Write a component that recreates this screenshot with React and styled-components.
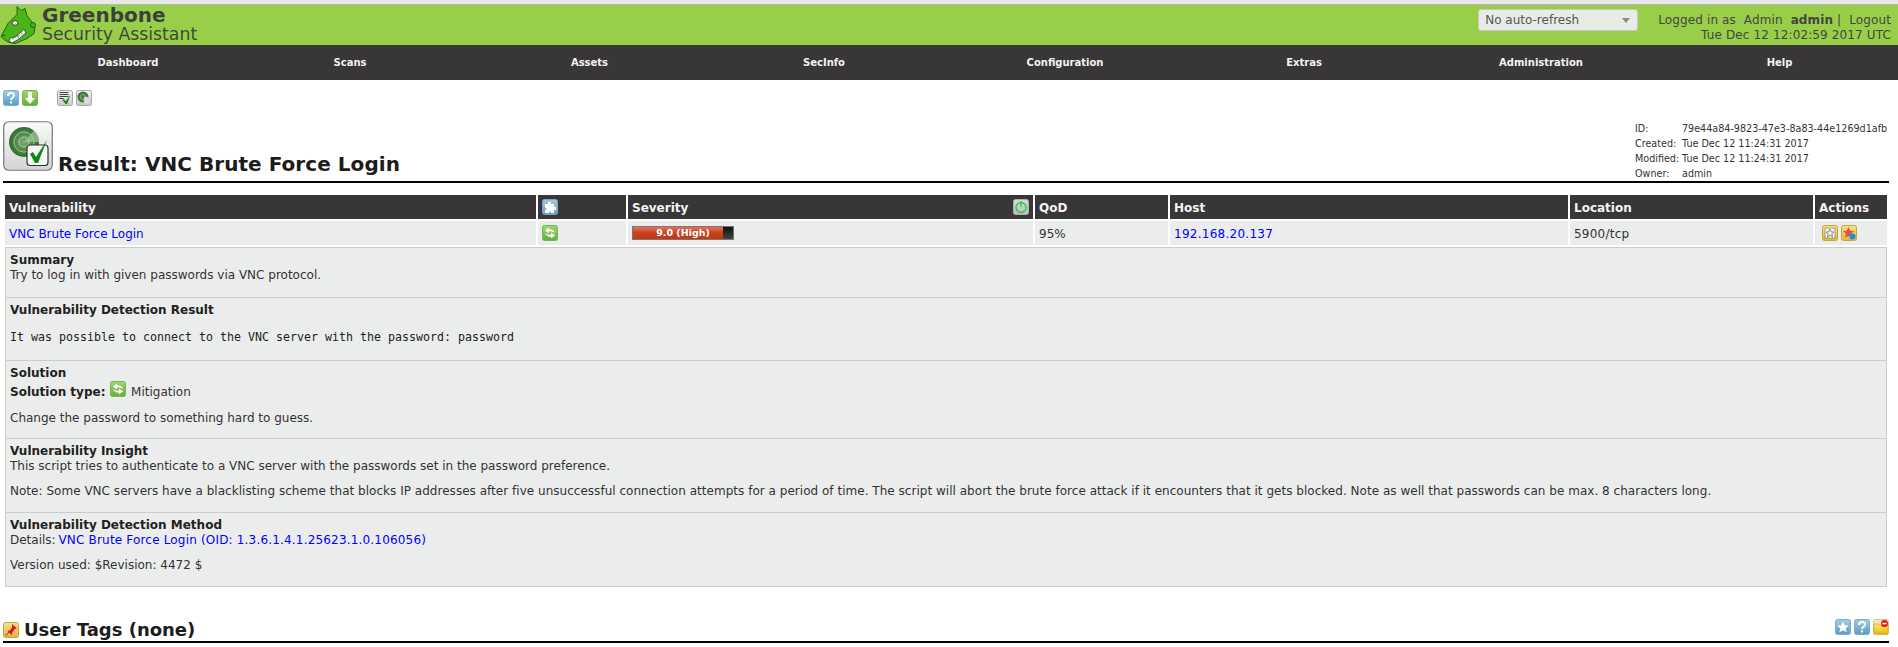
import React from "react";
import styled, { createGlobalStyle } from "styled-components";

const Global = createGlobalStyle`
  html, body { margin: 0; padding: 0; background: #fff; overflow: hidden; }
  body { font-family: "DejaVu Sans", sans-serif; font-size: 12px; color: #333; }
`;

const Page = styled.div`width: 1898px; height: 647px; overflow: hidden;`;
const TopStrip = styled.div`height: 4px; background: #e8e8e8; border-bottom: 1px solid #b5b5b5;`;
const Header = styled.header`
  height: 40px; background: #99cf48; display: flex; align-items: center; justify-content: space-between;
  padding-right: 7px; color: #444;
`;
const Brand = styled.div`display: flex; align-items: center; gap: 6px;`;
const BrandText = styled.div`display: flex; flex-direction: column; margin-top: -1px;`;
const BrandName = styled.span`font-size: 20px; line-height: 20px; font-weight: 700; color: #3d3f3f;`;
const BrandSub = styled.span`font-size: 17.3px; line-height: 19px; color: #3d4a3d;`;
const HeaderRight = styled.div`display: flex; align-items: flex-start; align-self: stretch; gap: 20px;`;
const RefreshSelect = styled.div`
  width: 152px; height: 20px; border: 1px solid #c9c9c9; border-radius: 3px; background: #e9ebe7;
  display: flex; align-items: center; justify-content: space-between; padding-left: 6px;
  margin-top: 4px; color: #555;
`;
const Caret = styled.span`
  width: 0; height: 0; border-left: 4px solid transparent; border-right: 4px solid transparent;
  border-top: 5px solid #888; margin-right: 7px;
`;
const UserInfo = styled.div`text-align: right; line-height: 14.500px; color: #444; margin-top: 8px; letter-spacing: .13px;`;
const Nav = styled.nav`height: 35px; background: #393637; display: flex; align-items: center; padding-bottom: 1px; box-sizing: border-box;`;
const NavItem = styled.a`
  flex: none; width: ${(p) => p.$w}px; text-align: center; color: #f2f2f2; font-size: 10px; font-weight: 700;
`;
const Toolbar = styled.div`display: flex; gap: 3px; padding: 10px 0 0 3px; height: 16px;`;
const ToolGap = styled.span`width: 13px;`;
const Tile = styled.svg`display: block; flex: none; width: ${(p) => p.$s || 16}px; height: ${(p) => p.$s || 16}px;`;
const InlineTile = styled(Tile)`display: inline-block; vertical-align: -1px; margin: 0 1px;`;

const SectionHead = styled.div`
  margin: 15px 9px 0 3px; height: 60px; border-bottom: 2px solid #000; display: flex; align-items: flex-end;
  justify-content: space-between;
`;
const TitleWrap = styled.div`display: flex; align-items: flex-end; gap: 5px; height: 60px;`;
const BigIcon = styled.div`align-self: flex-start;`;
const Title = styled.h1`margin: 0 0 3px; font-size: 20px; line-height: 28px; font-weight: 700; color: #1c1c1c; letter-spacing: .05px;`;
const Meta = styled.div`
  display: grid; grid-template-columns: 47px auto; font-size: 9.6px; line-height: 15px; color: #333; width: 254px; white-space: nowrap;
`;
const Grid = styled.div`
  margin: 12px 0 0 5px; width: 1882px; display: grid; row-gap: 2px; column-gap: 2px;
  grid-template-columns: 531px 88px 405px 133px 398px 243px 72px;
`;
const HeadCell = styled.div`
  height: 24px; background: #393637; color: #f4f4f4; font-weight: 700; padding: 0 4px; display: flex; align-items: center;
  justify-content: space-between; box-sizing: border-box;
`;
const Cell = styled.div`
  height: 24px; background: #ebecec; padding: 0 4px; display: flex; align-items: center; box-sizing: border-box; color: #333;
`;
const CellText = styled.span`display: block; padding-top: 2px; letter-spacing: ${(p) => p.$ls || 0}px;`;
const Link = styled.a`color: #0000ff; text-decoration: none; letter-spacing: ${(p) => p.$ls || 0}px; margin-left: ${(p) => p.$ml || 0}px;`;
const Icons = styled.div`display: flex; gap: 3px;`;
const ActionIcons = styled(Icons)`margin-left: 3px;`;
const Bar = styled.div`
  width: 100px; height: 12px; border: 1px solid #777; position: relative; background: linear-gradient(#111, #444); display: flex;
`;
const BarFill = styled.div`background: linear-gradient(#e0745f, #c8401c 50%, #c23a14);`;
const BarLabel = styled.span`
  position: absolute; inset: 0; text-align: center; color: #fff; font-size: 9.5px; font-weight: 700; line-height: 12px;
`;
const Details = styled.div`margin: 2px 0 0 5px; width: 1880px; border: 1px solid #ccc; background: #ebecec; color: #333;`;
const Block = styled.section`
  padding: 5px 4px 0; height: ${(p) => p.$h}px; box-sizing: border-box; line-height: 15px;
  border-top: ${(p) => (p.$first ? "none" : "1px solid #ccc")};
`;
const BlockTitle = styled.div`font-weight: 700; color: #222;`;
const Mono = styled.div`margin-top: 12px; font-family: "DejaVu Sans Mono", monospace; font-size: 11.64px; color: #222;`;
const Para = styled.p`margin: 10px 0 0; letter-spacing: ${(p) => p.$ls || 0}px;`;
const TypeLine = styled.div`line-height: 18px;`;
const Strong = styled.strong`font-weight: 700; color: #222;`;
const TagHead = styled.div`
  margin: 28px 9px 0 3px; height: 26px; border-bottom: 2px solid #000; display: flex; justify-content: space-between; align-items: flex-end;
`;
const TagTitle = styled.h2`display: flex; align-items: center; gap: 5px; margin: 0; font-size: 18px; line-height: 22px; color: #1c1c1c;`;
const TagIcons = styled(Icons)`margin-bottom: 6px;`;

const Grad = ({ id, a, b }) => (
  <linearGradient id={id} x1="0" y1="0" x2="0" y2="1">
    <stop offset="0" stopColor={a} />
    <stop offset="1" stopColor={b} />
  </linearGradient>
);

const Base = ({ id, a, b, line, children, as: T = Tile }) => (
  <T viewBox="0 0 16 16">
    <defs><Grad id={id} a={a} b={b} /></defs>
    <rect x=".5" y=".5" width="15" height="15" rx="2" fill={`url(#${id})`} stroke={line} />
    {children}
  </T>
);

const blue = { a: "#a3cde4", b: "#5b9cc4", line: "#7aaecb" };
const green = { a: "#a2d86e", b: "#62ae3c", line: "#74b84e" };
const grey = { a: "#f4f4f4", b: "#c8c8c8", line: "#a9a9a9" };
const gold = { a: "#f4e28a", b: "#dfb73e", line: "#c8a437" };

const Help = ({ id = "h" }) => (
  <Base id={id} {...blue}>
    <path d="M5 6c0-4 6-4 6-.5 0 2.200-3 2.200-3 4.500" fill="none" stroke="#fff" strokeWidth="2" />
    <rect x="7" y="11.300" width="2" height="2.200" fill="#fff" />
  </Base>
);
const Down = () => (
  <Base id="d" {...green}>
    <path d="M6 2h4v6h3l-5 6-5-6h3z" fill="#fff" />
  </Base>
);
const ListCheck = () => (
  <Base id="l" {...grey}>
    <path d="M2.500 2.500h9M2.500 4.500h9M2.500 6.500h9M2.500 8.500h4" stroke="#444" strokeWidth="1" />
    <path d="M5.500 10l1.500-1 1.500 2.500L13.500 5l-3.500 9H8.500z" fill="#0a8a12" />
  </Base>
);
const RadarSmall = () => (
  <Base id="r" {...grey}>
    <circle cx="7" cy="7" r="5.500" fill="#3f7a3a" />
    <circle cx="7" cy="7" r="2.500" fill="none" stroke="#9ec596" strokeWidth=".8" />
    <path d="M8 7h4l2 2v5H8z" fill="#dcdcdc" stroke="#bbb" strokeWidth=".5" />
  </Base>
);
const Puzzle = () => (
  <Base id="p" a="#a8c6dc" b="#6d9cc0" line="#7ca7c7">
    <path d="M3 5h3c-1-3 4-3 3 0h3v3c3-1 3 4 0 3v3H9c1-2-3-2-2 0H3v-3c2 1 2-3 0-2z" fill="#fff" />
  </Base>
);
const Swap = ({ id = "s", as }) => (
  <Base id={id} as={as} {...green}>
    <path d="M3 5.500L7 2.500v1.800c3 0 5 1 6 3.700-1.500-1.300-3-1.800-6-1.800V8.500z" fill="#fff" />
    <path d="M13 10.500L9 13.500v-1.800c-3 0-5-1-6-3.700 1.500 1.300 3 1.800 6 1.800V7.500z" fill="#fff" />
  </Base>
);
const Power = () => (
  <Base id="w" a="#d8d8d8" b="#bdbdbd" line="#ababab">
    <circle cx="8" cy="8.500" r="5" fill="none" stroke="#1fd12c" strokeWidth="1.300" />
    <path d="M8 2.500v5" stroke="#1fd12c" strokeWidth="1.300" />
  </Base>
);
const NoteNew = () => (
  <Base id="n" {...gold}>
    <rect x="3" y="3" width="10" height="10" fill="#f5f5ee" stroke="#777" strokeWidth=".6" />
    <path d="M8 4l1.200 2.800 2.800.2-2.200 1.800.8 3L8 10.300 5.400 12l.8-3L4 7l2.800-.2z" fill="none" stroke="#666" strokeWidth=".7" />
  </Base>
);
const OverrideNew = () => (
  <Base id="o" {...gold}>
    <path d="M7.500 2l1.700 3.700 4 .4-3 2.700.9 4L7.500 11l-3.600 1.800.9-4-3-2.700 4-.4z" fill="#e0524e" />
    <circle cx="11.500" cy="11.500" r="3" fill="#1b8fd0" />
  </Base>
);
const Pin = () => (
  <Base id="i" {...gold}>
    <path d="M9 2l5 4.500-2.500.8-2.200 3.200-.6 2.500L4.500 9l2.500-.8 2-2.600z" fill="#e5121a" />
    <path d="M6 10l-3.500 4" stroke="#7a3b2a" strokeWidth="1" />
  </Base>
);
const StarNew = () => (
  <Base id="a" {...blue}>
    <path d="M8 2.500l1.700 3.700 4 .4-3 2.700.9 4L8 11.300l-3.600 2 .9-4-3-2.700 4-.4z" fill="#fff" />
  </Base>
);
const Folder = () => (
  <Tile viewBox="0 0 16 16">
    <defs><Grad id="f" a="#ffe873" b="#e8b90f" /></defs>
    <rect x=".5" y=".5" width="15" height="15" rx="2" fill="#f6e9b0" stroke="#d7c57c" />
    <path d="M1 5h5l1 1.500h8V15H1z" fill="url(#f)" stroke="#caa21b" strokeWidth=".6" />
    <circle cx="11.500" cy="4.500" r="3.500" fill="#e8141c" />
    <rect x="9.300" y="3.800" width="4.400" height="1.500" fill="#fff" />
  </Tile>
);

const RadarBig = () => (
  <Tile $s={50} viewBox="0 0 50 50">
    <defs>
      <Grad id="big" a="#fafafa" b="#d4d4d4" />
      <radialGradient id="rad"><stop offset="0" stopColor="#7dab71" /><stop offset="1" stopColor="#2f6f2c" /></radialGradient>
    </defs>
    <rect x=".75" y=".75" width="48.500" height="48.500" rx="5" fill="url(#big)" stroke="#777" strokeWidth="1.200" />
    <circle cx="21" cy="21" r="15" fill="url(#rad)" />
    <path d="M21 21L31 9.500A15 15 0 0 1 36 21z" fill="#a9c6a3" opacity=".7" />
    <circle cx="21" cy="21" r="10" fill="none" stroke="#9fc496" />
    <circle cx="21" cy="21" r="5" fill="none" stroke="#b4d2ac" />
    <rect x="24" y="24" width="21" height="20.500" rx="3" fill="#f7f7f7" stroke="#333" strokeWidth="1.200" />
    <path d="M27 33l3-2 3 5L44 19 35 42h-3z" fill="#0a8a12" />
  </Tile>
);

const Logo = () => (
  <svg width="36" height="40" viewBox="0 0 36 40" style={{ flex: "none" }}>
    <path d="M1 31l7-13 9-9 0-8 4 4 4-2 2 7 6 8 2 5-1 5-7 5-12 5-6-1-5-3z" fill="#49b51a" stroke="#23640e" strokeWidth="1" transform="translate(0 .5)" />
    <ellipse cx="15" cy="18" rx="3" ry="2.300" fill="#fff" stroke="#1d4a10" />
    <path d="M10 33l5-1 6-5 3-3 2 4-7 6-7 4-3-2z" fill="#f3f6ef" stroke="#1d4a10" strokeWidth=".8" />
    <path d="M12 34l8-4M17 29l2 5M21 27l2 4" stroke="#5b6a55" strokeWidth=".6" />
    <circle cx="33" cy="20" r="2.500" fill="#49b51a" stroke="#23640e" />
    <path d="M2 31l3-1" stroke="#1d4a10" />
  </svg>
);

const navItems = [
  ["Dashboard", 256], ["Scans", 188], ["Assets", 291], ["SecInfo", 178],
  ["Configuration", 304], ["Extras", 174], ["Administration", 300], ["Help", 177],
];

export default function App() {
  return (
    <Page>
      <Global />
      <TopStrip />
      <Header>
        <Brand>
          <Logo />
          <BrandText>
            <BrandName>Greenbone</BrandName>
            <BrandSub>Security Assistant</BrandSub>
          </BrandText>
        </Brand>
        <HeaderRight>
          <RefreshSelect>No auto-refresh<Caret /></RefreshSelect>
          <UserInfo>
            <div>Logged in as&nbsp; Admin&nbsp; <b>admin</b> |&nbsp; Logout</div>
            <div>Tue Dec 12 12:02:59 2017 UTC</div>
          </UserInfo>
        </HeaderRight>
      </Header>
      <Nav>
        {navItems.map(([t, w]) => <NavItem key={t} $w={w}>{t}</NavItem>)}
      </Nav>
      <Toolbar>
        <Help /><Down /><ToolGap /><ListCheck /><RadarSmall />
      </Toolbar>
      <SectionHead>
        <TitleWrap>
          <BigIcon><RadarBig /></BigIcon>
          <Title>Result: VNC Brute Force Login</Title>
        </TitleWrap>
        <Meta>
          <span>ID:</span><span>79e44a84-9823-47e3-8a83-44e1269d1afb</span>
          <span>Created:</span><span>Tue Dec 12 11:24:31 2017</span>
          <span>Modified:</span><span>Tue Dec 12 11:24:31 2017</span>
          <span>Owner:</span><span>admin</span>
        </Meta>
      </SectionHead>
      <Grid>
        <HeadCell><CellText>Vulnerability</CellText></HeadCell>
        <HeadCell><Puzzle /></HeadCell>
        <HeadCell><CellText>Severity</CellText><Power /></HeadCell>
        <HeadCell><CellText>QoD</CellText></HeadCell>
        <HeadCell><CellText>Host</CellText></HeadCell>
        <HeadCell><CellText>Location</CellText></HeadCell>
        <HeadCell><CellText>Actions</CellText></HeadCell>
        <Cell><CellText><Link>VNC Brute Force Login</Link></CellText></Cell>
        <Cell><Swap /></Cell>
        <Cell>
          <Bar>
            <BarFill style={{ width: "90%" }} />
            <BarLabel>9.0 (High)</BarLabel>
          </Bar>
        </Cell>
        <Cell><CellText>95%</CellText></Cell>
        <Cell><CellText><Link $ls={0.26}>192.168.20.137</Link></CellText></Cell>
        <Cell><CellText $ls={0.23}>5900/tcp</CellText></Cell>
        <Cell><ActionIcons><NoteNew /><OverrideNew /></ActionIcons></Cell>
      </Grid>
      <Details>
        <Block $first $h={49}>
          <BlockTitle>Summary</BlockTitle>
          <div>Try to log in with given passwords via VNC protocol.</div>
        </Block>
        <Block $h={63}>
          <BlockTitle>Vulnerability Detection Result</BlockTitle>
          <Mono>It was possible to connect to the VNC server with the password: password</Mono>
        </Block>
        <Block $h={78}>
          <BlockTitle>Solution</BlockTitle>
          <TypeLine><Strong>Solution type:</Strong> <Swap id="s2" as={InlineTile} /> Mitigation</TypeLine>
          <Para>Change the password to something hard to guess.</Para>
        </Block>
        <Block $h={74}>
          <BlockTitle>Vulnerability Insight</BlockTitle>
          <div>This script tries to authenticate to a VNC server with the passwords set in the password preference.</div>
          <Para $ls={0.025}>Note: Some VNC servers have a blacklisting scheme that blocks IP addresses after five unsuccessful connection attempts for a period of time. The script will abort the brute force attack if it encounters that it gets blocked. Note as well that passwords can be max. 8 characters long.</Para>
        </Block>
        <Block $h={74}>
          <BlockTitle>Vulnerability Detection Method</BlockTitle>
          <div>Details: <Link $ls={0.18} $ml={-1}>VNC Brute Force Login (OID: 1.3.6.1.4.1.25623.1.0.106056)</Link></div>
          <Para>Version used: $Revision: 4472 $</Para>
        </Block>
      </Details>
      <TagHead>
        <TagTitle><Pin />User Tags (none)</TagTitle>
        <TagIcons><StarNew /><Help id="h2" /><Folder /></TagIcons>
      </TagHead>
    </Page>
  );
}
